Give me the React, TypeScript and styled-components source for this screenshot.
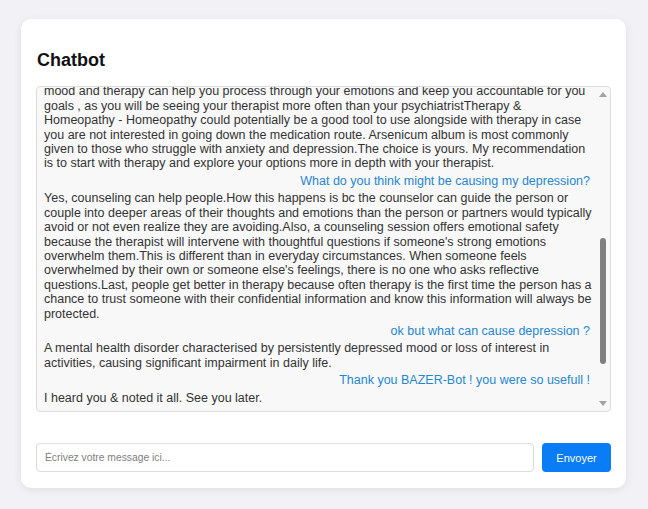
import React, { useLayoutEffect, useRef } from "react";
import styled, { createGlobalStyle } from "styled-components";

const GlobalStyle = createGlobalStyle`
  html, body {
    margin: 0;
    padding: 0;
    background: #f2f2f6;
    font-family: "Liberation Sans", Arial, sans-serif;
  }
`;

const Page = styled.div`
  padding: 19px 22px 22px 21px;
`;

const Card = styled.div`
  background: #ffffff;
  border-radius: 10px;
  box-shadow: 0 2px 8px rgba(0, 0, 0, 0.08);
  padding: 15px 15px 16px 15px;
`;

const Title = styled.h2`
  margin: 14px 0 14px 1px;
  font-size: 18px;
  line-height: 24px;
  font-weight: bold;
  color: #111;
`;

const ChatFrame = styled.div`
  box-sizing: border-box;
  height: 326px;
  display: flex;
  border: 1px solid #dddddd;
  border-radius: 4px;
  background: #f8f8f8;
  overflow: hidden;
`;

const Scroller = styled.div`
  flex: 1;
  min-width: 0;
  overflow-y: auto;
  scrollbar-width: none;
  padding: 0 1px 3px 7px;
  &::-webkit-scrollbar {
    display: none;
  }
`;

const ScrollColumn = styled.div`
  width: 15px;
  flex: none;
  display: flex;
  flex-direction: column;
`;

const ArrowButton = styled.div`
  height: 15px;
  display: flex;
  align-items: center;
  justify-content: center;
`;

const Track = styled.div`
  flex: 1;
  display: flex;
  justify-content: center;
`;

const Thumb = styled.div`
  width: 6px;
  height: 126px;
  margin-top: 136px;
  border-radius: 3px;
  background: #7f7f7f;
`;

const Message = styled.div<{ $user?: boolean }>`
  font-size: 12.5px;
  line-height: 14.4px;
  margin-bottom: 3px;
  padding-right: ${(p) => (p.$user ? "4px" : "0")};
  color: ${(p) => (p.$user ? "#1f87d3" : "#333333")};
  text-align: ${(p) => (p.$user ? "right" : "left")};
`;

const InputRow = styled.div`
  display: flex;
  gap: 8px;
  margin-top: 31px;
`;

const Input = styled.input`
  flex: 1;
  box-sizing: border-box;
  height: 29px;
  border: 1px solid #dddddd;
  border-radius: 4px;
  padding: 0 8px;
  font-family: "Liberation Sans", Arial, sans-serif;
  font-size: 10.3px;
  color: #333;
  outline: none;
  &::placeholder {
    color: #808080;
  }
`;

const SendButton = styled.button`
  box-sizing: border-box;
  width: 69px;
  height: 29px;
  border: none;
  border-radius: 4px;
  background: #0a7cf6;
  color: #ffffff;
  font-family: "Liberation Sans", Arial, sans-serif;
  font-size: 11px;
  cursor: pointer;
`;

const Arrow = ({ down }: { down?: boolean }) => (
  <svg width="8" height="5" viewBox="0 0 8 5">
    <path d={down ? "M0 0 L8 0 L4 5 Z" : "M0 5 L8 5 L4 0 Z"} fill="#a3a3a3" />
  </svg>
);

type Msg = { user: boolean; text: React.ReactNode };

const messages: Msg[] = [
  { user: false, text: "Hello! I am BAZER-Bot. How can I help you today?" },
  { user: true, text: "I have been feeling very down lately." },
  {
    user: false,
    text: "I am sorry to hear that. Feeling down for a long time can be a sign of depression, and talking about it is a good first step.",
  },
  { user: true, text: "Should I see a psychiatrist or a therapist?" },
  {
    user: false,
    text: (
      <>
        Both can be helpful. A psychiatrist can prescribe medication that may
        help to stabilize your
        <br />
        mood and therapy can help you process through your emotions and keep you
        accountable for you goals , as you will be seeing your therapist more
        often than your psychiatristTherapy &amp; Homeopathy - Homeopathy could
        potentially be a good tool to use alongside with therapy in case you are
        not interested in going down the medication route. Arsenicum album is
        most commonly given to those who struggle with anxiety and
        depression.The choice is yours. My recommendation is to start with
        therapy and explore your options more in depth with your therapist.
      </>
    ),
  },
  { user: true, text: "What do you think might be causing my depression?" },
  {
    user: false,
    text: "Yes, counseling can help people.How this happens is bc the counselor can guide the person or couple into deeper areas of their thoughts and emotions than the person or partners would typically avoid or not even realize they are avoiding.Also, a counseling session offers emotional safety because the therapist will intervene with thoughtful questions if someone's strong emotions overwhelm them.This is different than in everyday circumstances. When someone feels overwhelmed by their own or someone else's feelings, there is no one who asks reflective questions.Last, people get better in therapy because often therapy is the first time the person has a chance to trust someone with their confidential information and know this information will always be protected.",
  },
  { user: true, text: "ok but what can cause depression ?" },
  {
    user: false,
    text: "A mental health disorder characterised by persistently depressed mood or loss of interest in activities, causing significant impairment in daily life.",
  },
  { user: true, text: "Thank you BAZER-Bot ! you were so usefull !" },
  { user: false, text: "I heard you & noted it all. See you later." },
];

export default function App() {
  const boxRef = useRef<HTMLDivElement>(null);
  useLayoutEffect(() => {
    if (boxRef.current) boxRef.current.scrollTop = boxRef.current.scrollHeight;
  }, []);
  return (
    <>
      <GlobalStyle />
      <Page>
        <Card>
          <Title>Chatbot</Title>
          <ChatFrame>
            <Scroller ref={boxRef}>
              {messages.map((m, i) => (
                <Message key={i} $user={m.user}>
                  {m.text}
                </Message>
              ))}
            </Scroller>
            <ScrollColumn>
              <ArrowButton>
                <Arrow />
              </ArrowButton>
              <Track>
                <Thumb />
              </Track>
              <ArrowButton>
                <Arrow down />
              </ArrowButton>
            </ScrollColumn>
          </ChatFrame>
          <InputRow>
            <Input placeholder="Écrivez votre message ici..." />
            <SendButton>Envoyer</SendButton>
          </InputRow>
        </Card>
      </Page>
    </>
  );
}
